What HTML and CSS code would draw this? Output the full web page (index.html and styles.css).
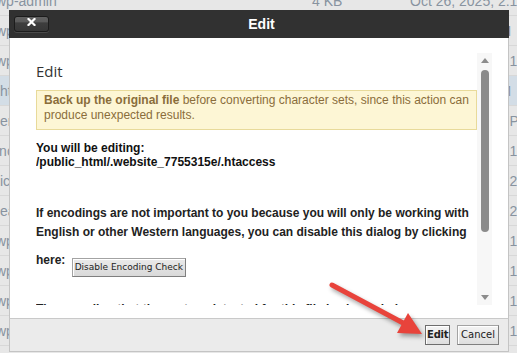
FILE: index.html
```html
<!DOCTYPE html>
<html lang="en">
<head>
<meta charset="utf-8">
<title>Edit</title>
<link rel="stylesheet" href="styles.css">
</head>
<body>
<div class="files">
  <div class="row"><span class="name">wp-admin</span><span class="size">4 KB</span><span class="date">Oct 26, 2025, 2:18 PM</span></div>
  <div class="row"><span class="name">wp-content</span><span class="size">4 KB</span><span class="date">Oct 8, 2025, PM</span></div>
  <div class="row"><span class="name">wp-includes</span><span class="size">12 KB</span><span class="date">Oct 26, 2025, 2:19 PM</span></div>
  <div class="row selected"><span class="name">.htaccess</span><span class="size">1 KB</span><span class="date">Oct 8, 2025, PM</span></div>
  <div class="row"><span class="name">.env</span><span class="size">1 KB</span><span class="date">Oct 26, 2025, 9 PM</span></div>
  <div class="row"><span class="name">inc.php</span><span class="size">405 bytes</span><span class="date">Oct 26, 2025, 2:11 PM</span></div>
  <div class="row"><span class="name">.icons</span><span class="size">7 KB</span><span class="date">Oct 26, 2025, 2:21 PM</span></div>
  <div class="row"><span class="name">.eaccess</span><span class="size">2 KB</span><span class="date">Oct 26, 2025, 2:28 PM</span></div>
  <div class="row"><span class="name">wp-activate.php</span><span class="size">7 KB</span><span class="date">Oct 26, 2025, 2:11 PM</span></div>
  <div class="row"><span class="name">wp-blog-header.php</span><span class="size">351 bytes</span><span class="date">Oct 26, 2025, 2:11 PM</span></div>
  <div class="row"><span class="name">wp-comments-post.php</span><span class="size">2 KB</span><span class="date">Oct 26, 2025, 2:11 PM</span></div>
  <div class="row"><span class="name">wp-config.php</span><span class="size">3 KB</span><span class="date">Oct 26, 2025, 2:11 PM</span></div>
</div>

<div class="dialog">
  <div class="titlebar">
    <button class="close" type="button" aria-label="Close">
      <svg width="9" height="8" viewBox="0 0 9 8"><path d="M1.5 1 L7.5 7 M7.5 1 L1.5 7" stroke="#fff" stroke-width="2.2" stroke-linecap="square" fill="none"/></svg>
    </button>
    <span class="title">Edit</span>
    <span></span>
  </div>
  <div class="body">
    <div class="scroll">
      <div class="content">
        <h3 class="heading">Edit</h3>
        <div class="warning"><b>Back up the original file</b> before converting character sets, since this action can produce unexpected results.</div>
        <p class="editing">You will be editing:<br>/public_html/.website_7755315e/.htaccess</p>
        <p class="note">If encodings are not important to you because you will only be working with English or other Western languages, you can disable this dialog by clicking here: <button class="btn small" type="button">Disable Encoding Check</button></p>
        <p class="note last">The encoding that the system detected for this file is shown below.</p>
      </div>
      <div class="scrollbar">
        <span class="sb-btn"><span class="tri up"></span></span>
        <span class="thumb"></span>
        <span class="sb-space"></span>
        <span class="sb-btn"><span class="tri down"></span></span>
      </div>
    </div>
  </div>
  <div class="footer">
    <button class="btn main" type="button">Edit</button>
    <button class="btn" type="button">Cancel</button>
  </div>
</div>

<svg class="pointer" width="517" height="353" viewBox="0 0 517 353">
  <g class="pointer-shape">
    <line x1="332" y1="285" x2="405" y2="324" stroke="#e8433b" stroke-width="5" stroke-linecap="round"/>
    <polygon points="422,334 408,313 397,333" fill="#e8433b"/>
  </g>
</svg>
</body>
</html>
```

FILE: styles.css
```css
* {
  box-sizing: border-box;
}

html,
body {
  margin: 0;
  padding: 0;
}

body {
  position: relative;
  width: 517px;
  height: 353px;
  overflow: hidden;
  background: #e7e7e7;
  font-family: "Liberation Sans", Arial, sans-serif;
}

/* background file list */
.files {
  margin-top: -14px;
  margin-left: -4px;
  width: calc(100% + 4px);
}

.row {
  display: grid;
  grid-template-columns: 316px 98px 1fr;
  align-items: center;
  height: 30px;
  border-bottom: 1px solid #d8d8d8;
  color: #8893a0;
  font-size: 14px;
  white-space: nowrap;
  overflow: hidden;
}

.row.selected {
  background: #d3dde6;
}

/* dialog */
.dialog {
  position: absolute;
  left: 9px;
  top: 10px;
  width: 500px;
  height: 342px;
  display: flex;
  flex-direction: column;
}

.titlebar {
  height: 28px;
  flex: none;
  background: #313131;
  display: grid;
  grid-template-columns: 1fr auto 1fr;
  align-items: center;
  padding-left: 5px;
}

.title {
  color: #fff;
  font-weight: bold;
  font-size: 14px;
}

.close {
  justify-self: start;
  width: 35px;
  height: 16px;
  margin: 0 0 1px 0;
  padding: 0 0 4px 0;
  border: 1px solid #1c1c1c;
  border-radius: 3px;
  background: linear-gradient(#616161 0, #5a5a5a 38%, #3e3e3e 40%, #373737 100%);
  box-shadow: 0 1px 0 #4a4a4a;
  display: flex;
  align-items: center;
  justify-content: center;
}

.close svg {
  display: block;
}

.body {
  flex: 1;
  background: #fff;
  border-left: 1px solid #c4c4c4;
  border-right: 1px solid #c4c4c4;
  padding: 15px 16px 0 26px;
}

.scroll {
  display: flex;
  height: 252px;
  overflow: hidden;
}

.content {
  flex: 1;
  overflow: hidden;
  font-size: 12px;
}

.heading {
  margin: 8px 0 0;
  font-family: "Open Sans", "Liberation Sans", sans-serif;
  font-weight: normal;
  font-size: 15px;
  line-height: 21px;
  color: #333;
}

.warning {
  margin-top: 8px;
  height: 40px;
  padding: 2px 7px 0;
  border: 1px solid #e8da9a;
  background: #fdf6d5;
  color: #8a6d3b;
  line-height: 15px;
}

.editing {
  margin: 11px 0 0;
  line-height: 14px;
  font-weight: bold;
  color: #111;
}

.note {
  margin: 35px 0 0;
  line-height: 19px;
  font-weight: bold;
  color: #222;
}

.note.last {
  margin-top: 23px;
}

/* buttons */
.btn {
  height: 20px;
  padding: 0 3px;
  border: 1px solid #a3a3a3;
  border-right-color: #7f7f7f;
  border-bottom-color: #7f7f7f;
  background: linear-gradient(#f4f4f4, #dedede);
  box-shadow: inset 1px 1px 0 #fff;
  font-family: "DejaVu Sans", sans-serif;
  font-size: 10px;
  color: #222;
  line-height: 18px;
}

.btn.small {
  height: 19px;
  margin: 16px 0 0 3px;
  padding: 0 2px;
  font-size: 9px;
  line-height: 17px;
  vertical-align: -6px;
  background: linear-gradient(#eaeaea, #d9d9d9);
}

.btn.main {
  font-weight: bold;
  padding: 0 1px;
  letter-spacing: -0.3px;
  border-color: #6d6d6d;
}

/* fake scrollbar */
.scrollbar {
  width: 15px;
  flex: none;
  background: #f7f7f7;
  display: flex;
  flex-direction: column;
  align-items: center;
}

.sb-btn {
  height: 15px;
  width: 15px;
  flex: none;
  display: flex;
  align-items: center;
  justify-content: center;
}

.tri {
  width: 0;
  height: 0;
  border-left: 4px solid transparent;
  border-right: 4px solid transparent;
}

.tri.up {
  border-bottom: 5px solid #8c8c8c;
}

.tri.down {
  border-top: 5px solid #8c8c8c;
}

.thumb {
  width: 8px;
  height: 162px;
  margin-top: 2px;
  border-radius: 4px;
  background: #8b8b8b;
  flex: none;
}

.sb-space {
  flex: 1;
}

.footer {
  height: 34px;
  flex: none;
  background: #ebebeb;
  border: 1px solid #c4c4c4;
  border-top-color: #c9c9c9;
  display: flex;
  justify-content: flex-end;
  align-items: flex-start;
  gap: 7px;
  padding: 6px 9px 0 0;
}

/* annotation arrow */
.pointer {
  position: absolute;
  left: 0;
  top: 0;
  pointer-events: none;
}

.pointer-shape {
  filter: drop-shadow(2px 3px 2px rgba(0, 0, 0, 0.35));
}
```
